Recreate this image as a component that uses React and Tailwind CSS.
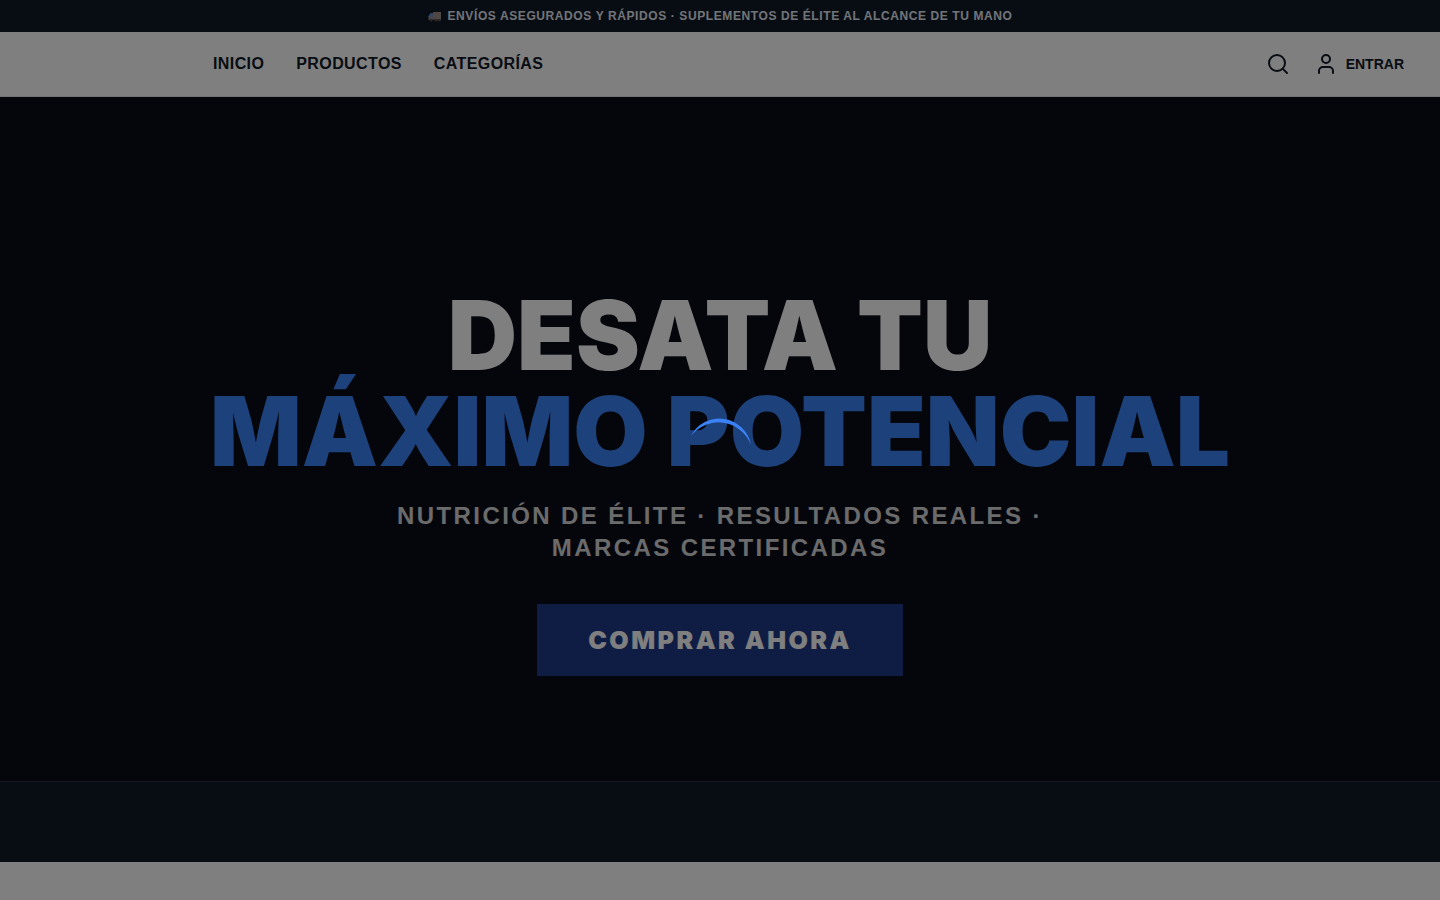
import { Search, User } from "lucide-react";

const links = ["INICIO", "PRODUCTOS", "CATEGORÍAS"];

function Truck() {
  return (
    <svg width="16" height="12" viewBox="0 0 16 12" aria-hidden="true">
      <path d="M6 2h8v7.5H6z" fill="#9c8f88" />
      <path d="M1.5 9.5V6.2L3.4 3.2h3v6.3z" fill="#8f8a92" />
      <path d="M2.2 6.4 3.7 3.8h1.8v2.6z" fill="#4f95f5" />
      <path d="M1.5 9h12.5v1H1.5z" fill="#6d6562" />
      <circle cx="4" cy="10.3" r="1.3" fill="#544d4a" />
      <circle cx="9" cy="10.3" r="1.3" fill="#544d4a" />
      <circle cx="12.2" cy="10.3" r="1.3" fill="#544d4a" />
    </svg>
  );
}

function TopBar() {
  return (
    <div className="flex h-8 items-center justify-center gap-1 bg-[#111827] px-4 text-xs font-bold tracking-wider text-[#e2e8f0]">
      <Truck />
      <p>ENVÍOS ASEGURADOS Y RÁPIDOS · SUPLEMENTOS DE ÉLITE AL ALCANCE DE TU MANO</p>
    </div>
  );
}

function Header() {
  return (
    <header className="flex items-center justify-between border-b border-[#e5e7eb] bg-white pr-9 pl-[213px] text-[#111827]">
      <nav className="flex h-16 items-center gap-8 font-bold tracking-wide">
        {links.map((label) => (
          <a key={label} href="#">
            {label}
          </a>
        ))}
      </nav>
      <div className="flex items-center gap-6">
        <button type="button" aria-label="Buscar">
          <Search size={24} />
        </button>
        <a href="#" className="flex items-center gap-2 text-sm font-bold">
          <User size={24} />
          ENTRAR
        </a>
      </div>
    </header>
  );
}

function Hero() {
  return (
    <section className="flex min-h-[76vh] flex-col items-center justify-center bg-[#0a0c16] px-4 pt-[85px] text-center text-white">
      <h1 className="mb-[21px] font-['Arial_Black',Inter,sans-serif] text-8xl leading-none font-black">
        DESATA TU
        <br />
        <span className="text-[#3b82f6]">MÁXIMO POTENCIAL</span>
      </h1>
      <p className="mb-10 max-w-2xl text-2xl font-bold tracking-widest text-[#d6d7d9]">
        NUTRICIÓN DE ÉLITE · RESULTADOS REALES · MARCAS CERTIFICADAS
      </p>
      <button
        type="button"
        className="bg-[#1e3a8a] px-[51px] py-5 font-['Arial_Black',Inter,sans-serif] text-[25px] leading-8 font-black tracking-widest"
      >
        COMPRAR AHORA
      </button>
    </section>
  );
}

function LoadingOverlay() {
  return (
    <div role="status" aria-label="Cargando" className="fixed inset-0 flex items-center justify-center bg-black/50">
      <svg className="size-16" viewBox="0 0 64 64" aria-hidden="true">
        <path d="M3 18A32 32 0 0 1 63 27A34.6 34.6 0 0 0 3 18Z" fill="#3b82f6" />
      </svg>
    </div>
  );
}

export default function App() {
  return (
    <div className="min-h-screen bg-white font-['Liberation_Sans',Arial,sans-serif]">
      <TopBar />
      <Header />
      <main>
        <Hero />
        <div className="h-[81px] border-t border-[#2a3442] bg-[#111827]" />
      </main>
      <LoadingOverlay />
    </div>
  );
}
